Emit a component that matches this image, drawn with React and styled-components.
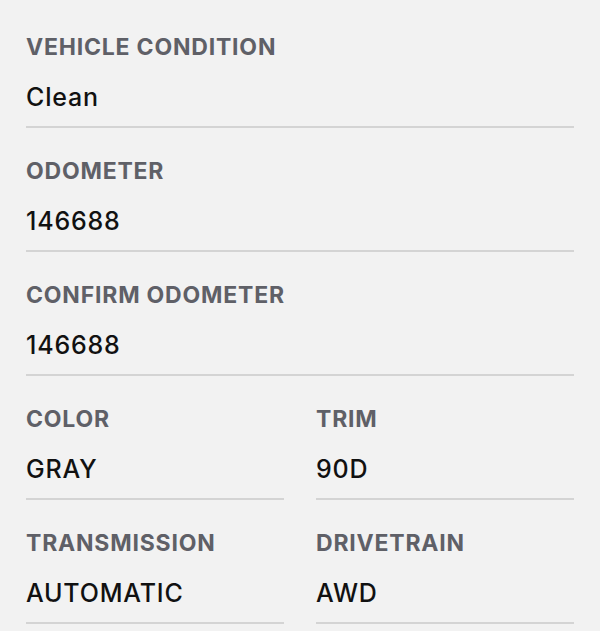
import React from "react";
import styled, { createGlobalStyle } from "styled-components";

const Global = createGlobalStyle`
  html, body { margin: 0; padding: 0; background: #f2f2f2; }
  body { font-family: Inter, Roboto, "Liberation Sans", sans-serif; }
`;

const Page = styled.div`
  width: 600px;
  height: 631px;
  overflow: hidden;
  box-sizing: border-box;
  padding: 4px 26px 0 26px;
  background: #f2f2f2;
`;

const Row = styled.div`
  display: grid;
  grid-template-columns: 1fr 1fr;
  column-gap: 32px;
`;

const Field = styled.div`
  display: flex;
  flex-direction: column;
  padding: 30px 0 14px 0;
  border-bottom: 2px solid #d4d4d4;
`;

const Label = styled.div`
  font-size: 23px;
  line-height: 26px;
  font-weight: 700;
  letter-spacing: 0.8px;
  color: #5f6067;
  text-transform: uppercase;
  margin-bottom: 22px;
  white-space: nowrap;
`;

const Value = styled.div`
  font-size: 25px;
  line-height: 30px;
  font-weight: 500;
  letter-spacing: 0.8px;
  color: #111111;
  white-space: nowrap;
`;

const Item = ({ label, value }) => (
  <Field>
    <Label>{label}</Label>
    <Value>{value}</Value>
  </Field>
);

export default function App() {
  return (
    <>
      <Global />
      <Page>
        <Item label="Vehicle Condition" value="Clean" />
        <Item label="Odometer" value="146688" />
        <Item label="Confirm Odometer" value="146688" />
        <Row>
          <Item label="Color" value="GRAY" />
          <Item label="Trim" value="90D" />
        </Row>
        <Row>
          <Item label="Transmission" value="AUTOMATIC" />
          <Item label="Drivetrain" value="AWD" />
        </Row>
      </Page>
    </>
  );
}
